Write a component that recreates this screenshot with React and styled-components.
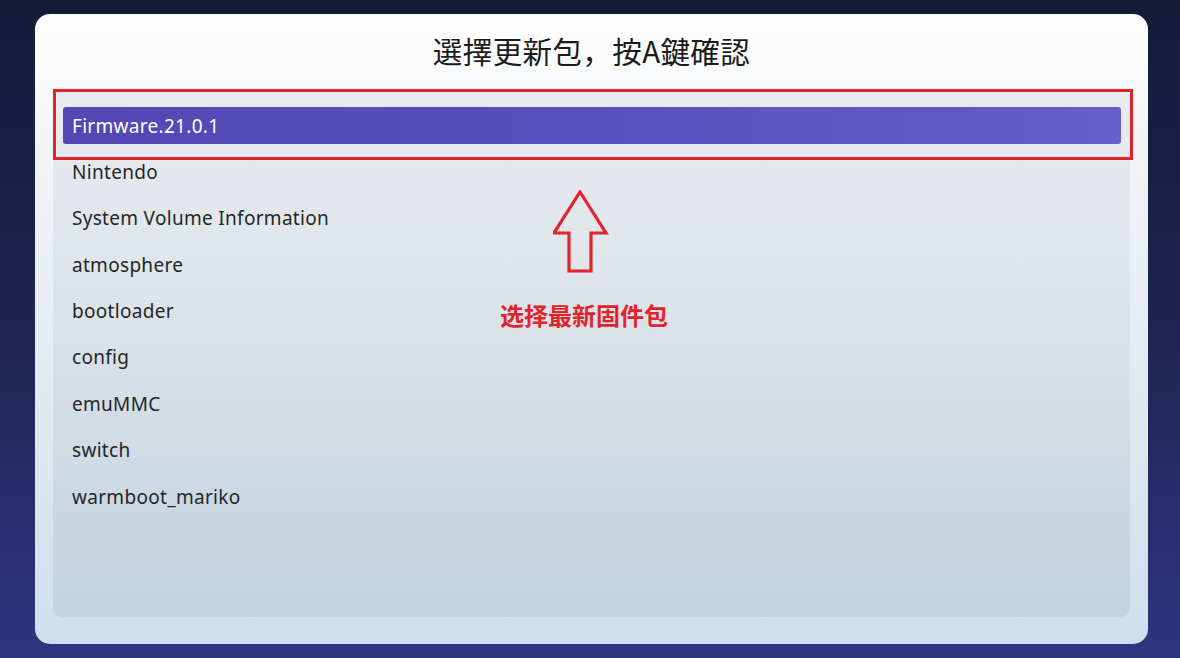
import React from 'react';
import styled, { createGlobalStyle } from 'styled-components';

const GlobalStyle = createGlobalStyle`
  html, body {
    margin: 0;
    padding: 0;
  }
  body {
    font-family: "Noto Sans", "Noto Sans CJK TC", sans-serif;
  }
`;

const Screen = styled.div`
  width: 1180px;
  height: 658px;
  box-sizing: border-box;
  padding: 14px 32px 14px 35px;
  background: linear-gradient(180deg, #161a37 0%, #1f2452 50%, #2f3680 100%);
  overflow: hidden;
`;

const Card = styled.div`
  height: 630px;
  box-sizing: border-box;
  padding: 0 18px 27px 18px;
  border-radius: 15px;
  background: linear-gradient(180deg, #fefefe 0%, #f3f5f7 20%, #dde7ef 70%, #cedfed 100%);
  display: flex;
  flex-direction: column;
`;

const Title = styled.h1`
  margin: 0;
  height: 76px;
  box-sizing: border-box;
  padding-bottom: 4px;
  display: flex;
  align-items: center;
  justify-content: center;
  font-family: "Noto Sans CJK JP", "Noto Sans CJK TC", sans-serif;
  font-weight: 400;
  font-size: 29.5px;
  color: #1b1b1b;
  letter-spacing: 0.4px;
`;

const Panel = styled.div`
  position: relative;
  flex: 1;
  border-radius: 9px;
  padding-top: 17px;
  background: linear-gradient(180deg, #e9ebee 0%, #dfe5ea 35%, #cdd9e3 75%, #c2d3e1 100%);
  display: flex;
  flex-direction: column;
`;

const Row = styled.div`
  height: 37px;
  margin: 0 9px 9.4px 10px;
  padding-left: 9px;
  display: flex;
  align-items: center;
  border-radius: 3px;
  font-size: 19px;
  letter-spacing: 0.3px;
  color: ${(p) => (p.selected ? '#ffffff' : '#242628')};
  background: ${(p) =>
    p.selected ? 'linear-gradient(90deg, #5447b5 0%, #5b50bf 55%, #665ec9 100%)' : 'transparent'};
`;

const Highlight = styled.div`
  position: absolute;
  top: -1px;
  left: 0;
  right: -3px;
  height: 71px;
  box-sizing: border-box;
  border: 3px solid #e0222c;
  pointer-events: none;
`;

const Callout = styled.div`
  position: absolute;
  top: 100px;
  left: 436px;
  width: 190px;
  display: flex;
  flex-direction: column;
  align-items: center;
  gap: 28px;
`;

const Arrow = styled.svg`
  margin-right: 5px;
`;

const CalloutText = styled.div`
  font-family: "Noto Sans CJK SC", sans-serif;
  font-weight: 700;
  font-size: 24px;
  line-height: 26px;
  color: #e3232c;
`;

const items = [
  'Firmware.21.0.1',
  'Nintendo',
  'System Volume Information',
  'atmosphere',
  'bootloader',
  'config',
  'emuMMC',
  'switch',
  'warmboot_mariko',
];

function UpArrow() {
  return (
    <Arrow width="58" height="84" viewBox="0 0 58 84">
      <path
        d="M27 2 L53 43 L38 43 L38 81 L16 81 L16 43 L1 43 Z"
        fill="none"
        stroke="#e3232c"
        strokeWidth="3.2"
        strokeLinejoin="miter"
      />
    </Arrow>
  );
}

export default function App() {
  return (
    <>
      <GlobalStyle />
      <Screen>
        <Card>
          <Title>選擇更新包，按A鍵確認</Title>
          <Panel>
            {items.map((name, i) => (
              <Row key={name} selected={i === 0}>
                {name}
              </Row>
            ))}
            <Highlight />
            <Callout>
              <UpArrow />
              <CalloutText>选择最新固件包</CalloutText>
            </Callout>
          </Panel>
        </Card>
      </Screen>
    </>
  );
}
